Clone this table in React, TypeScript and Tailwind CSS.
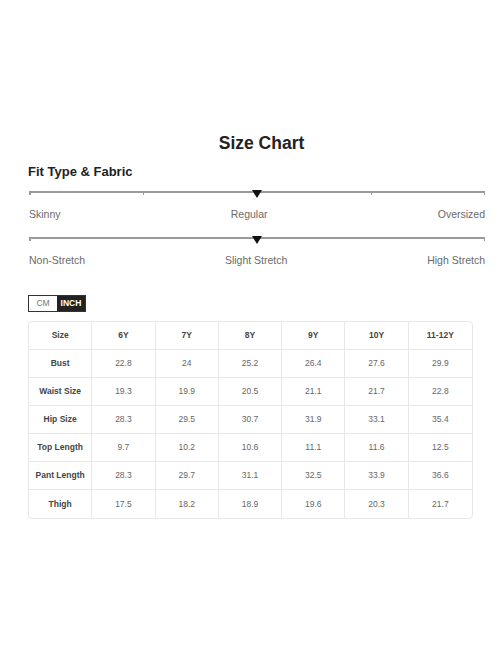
import React from "react";

const headers = ["Size", "6Y", "7Y", "8Y", "9Y", "10Y", "11-12Y"];
const rows: [string, string[]][] = [
  ["Bust", ["22.8", "24", "25.2", "26.4", "27.6", "29.9"]],
  ["Waist Size", ["19.3", "19.9", "20.5", "21.1", "21.7", "22.8"]],
  ["Hip Size", ["28.3", "29.5", "30.7", "31.9", "33.1", "35.4"]],
  ["Top Length", ["9.7", "10.2", "10.6", "11.1", "11.6", "12.5"]],
  ["Pant Length", ["28.3", "29.7", "31.1", "32.5", "33.9", "36.6"]],
  ["Thigh", ["17.5", "18.2", "18.9", "19.6", "20.3", "21.7"]],
];

function Slider({ ticks, labels }: { ticks: boolean; labels: string[] }) {
  return (
    <div>
      <div className="relative h-[12px]">
        <div className="absolute left-0 right-0 top-0 h-[1.5px] bg-[#9a9a9a]" />
        <div className="absolute left-0 top-0 h-[4px] w-[1.5px] bg-[#9a9a9a]" />
        <div className="absolute right-0 top-0 h-[4px] w-[1.5px] bg-[#9a9a9a]" />
        {ticks && (
          <>
            <div className="absolute left-[25%] top-0 h-[3.5px] w-[1px] bg-[#9a9a9a]" />
            <div className="absolute left-[75%] top-0 h-[3.5px] w-[1px] bg-[#9a9a9a]" />
          </>
        )}
        <svg
          className="absolute left-[50%] top-[-2px] ml-[-5px]"
          width="10"
          height="10"
          viewBox="0 0 10 10"
        >
          <polygon points="0,1 10,1 5,9" fill="#111" />
        </svg>
      </div>
      <div className="mt-[4px] flex justify-between text-[10.5px] leading-[14px] text-[#6a6a6a]">
        {labels.map((l) => (
          <span key={l}>{l}</span>
        ))}
      </div>
    </div>
  );
}

export default function App() {
  return (
    <div
      className="h-[660px] w-[500px] bg-white pl-[28px] pr-[15px] pt-[132px]"
      style={{ fontFamily: '"Liberation Sans", Arial, sans-serif' }}
    >
      <h1 className="pl-[10px] text-center text-[17.5px] font-bold leading-[22px] text-[#222]">
        Size Chart
      </h1>
      <h2 className="mt-[10px] text-[13px] font-bold leading-[16px] text-[#222]">
        Fit Type &amp; Fabric
      </h2>
      <div className="mt-[11px] pl-[1px]">
        <Slider ticks labels={["Skinny", "Regular", "Oversized"]} />
      </div>
      <div className="mt-[16px] pl-[1px]">
        <Slider ticks={false} labels={["Non-Stretch", "Slight Stretch", "High Stretch"]} />
      </div>
      <div className="mt-[28px] flex h-[17px] w-[58px] border border-[#333]">
        <div className="flex flex-1 items-center justify-center bg-white text-[8.5px] text-[#777]">
          CM
        </div>
        <div className="flex flex-1 items-center justify-center bg-[#222] text-[8.5px] font-bold text-white">
          INCH
        </div>
      </div>
      <div className="mt-[9px] w-[445px] overflow-hidden rounded-[4px] border border-[#e8e8e8]">
        <div className="grid grid-cols-7">
          {headers.map((h, i) => (
            <div
              key={h}
              className={
                i < 6
                  ? "flex h-[28px] items-center justify-center border-b border-r border-[#e8e8e8] text-[8.5px] font-bold text-[#444]"
                  : "flex h-[28px] items-center justify-center border-b border-[#e8e8e8] text-[8.5px] font-bold text-[#444]"
              }
            >
              {h}
            </div>
          ))}
          {rows.map(([name, vals], r) => (
            <React.Fragment key={name}>
              <div
                className={
                  r < rows.length - 1
                    ? "flex h-[28px] items-center justify-center border-b border-r border-[#e8e8e8] text-[8.5px] font-bold text-[#444]"
                    : "flex h-[28px] items-center justify-center border-r border-[#e8e8e8] text-[8.5px] font-bold text-[#444]"
                }
              >
                {name}
              </div>
              {vals.map((v, i) => (
                <div
                  key={i}
                  className={
                    r < rows.length - 1
                      ? i < 5
                        ? "flex h-[28px] items-center justify-center border-b border-r border-[#e8e8e8] text-[8.5px] text-[#666]"
                        : "flex h-[28px] items-center justify-center border-b border-[#e8e8e8] text-[8.5px] text-[#666]"
                      : i < 5
                      ? "flex h-[28px] items-center justify-center border-r border-[#e8e8e8] text-[8.5px] text-[#666]"
                      : "flex h-[28px] items-center justify-center text-[8.5px] text-[#666]"
                  }
                >
                  {v}
                </div>
              ))}
            </React.Fragment>
          ))}
        </div>
      </div>
    </div>
  );
}
